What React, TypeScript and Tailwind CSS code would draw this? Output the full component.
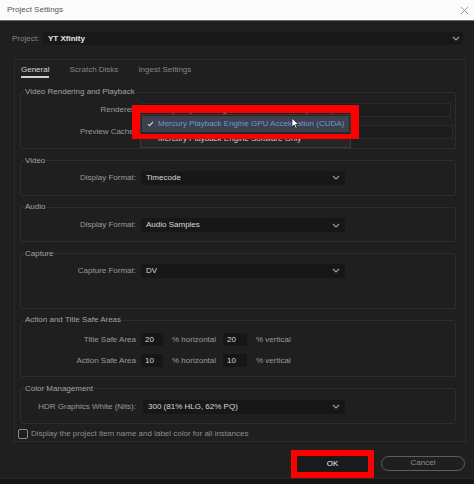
const Chevron = ({ color = "#9a9a9a" }: { color?: string }) => (
  <svg viewBox="0 0 8 5" className="h-[5px] w-[8px]" fill="none" stroke={color} strokeWidth="1.2">
    <path d="M1 1l3 3 3-3" />
  </svg>
);

function Select({ value, className = "w-[204px]" }: { value: string; className?: string }) {
  return (
    <div className={`flex h-[14px] items-center justify-between bg-[#171717] pl-[5px] pr-[5px] text-[#d8d8d8] ${className}`}>
      <span className="truncate">{value}</span>
      <Chevron />
    </div>
  );
}

// selects behind the open menu look dimmed in the shot
function DimSelect({ value, className = "" }: { value: string; className?: string }) {
  return (
    <div className={`flex h-[14px] flex-1 items-center border border-[#2a2a2a] bg-[#1d1d1d] pl-[5px] text-[#8a8a8a] ${className}`}>
      <span className="truncate">{value}</span>
    </div>
  );
}

function Input({ value, className = "w-[22px]" }: { value: string; className?: string }) {
  return (
    <div className={`flex h-[13px] items-center bg-[#161616] pl-[4px] text-[#d8d8d8] ${className}`}>{value}</div>
  );
}

function Row({ label, children, className = "" }: { label: string; children: React.ReactNode; className?: string }) {
  return (
    <div className={`flex items-center ${className}`}>
      <span className="w-[115px] shrink-0 text-right">{label}</span>
      <div className="ml-[5px] flex flex-1 items-center">{children}</div>
    </div>
  );
}

function Group({ title, className = "", children }: { title: string; className?: string; children: React.ReactNode }) {
  return (
    <fieldset className={`rounded-[2px] border border-[#2d2d2d] ${className}`}>
      <legend className="ml-[3px] px-[1px] leading-[10px] text-[#a3a3a3]">{title}</legend>
      {children}
    </fieldset>
  );
}

export default function App() {
  return (
    <div className="relative flex h-[484px] w-[474px] flex-col overflow-hidden bg-[#1f1f1f] font-['Liberation_Sans',Arial,sans-serif] text-[8px] leading-[10px] text-[#9a9a9a]">
      {/* title bar */}
      <div className="flex h-[21px] shrink-0 items-center justify-between border-b border-[#6a6a6a] bg-[#fbfbfb] pl-[7px] pr-[5px]">
        <span className="text-[#555]">Project Settings</span>
        <svg viewBox="0 0 10 10" className="h-[9px] w-[9px]" stroke="#8c8c8c" strokeWidth="1">
          <path d="M1 1l8 8M9 1l-8 8" />
        </svg>
      </div>

      {/* project */}
      <div className="mt-[11px] flex h-[13px] items-center pl-[12px] pr-[11px]">
        <span className="w-[31px] shrink-0 text-[#858585]">Project:</span>
        <div className="flex h-full flex-1 items-center justify-between bg-[#181818] pl-[5px] pr-[3px]">
          <span className="font-bold text-[#e4e4e4]">YT Xfinity</span>
          <Chevron />
        </div>
      </div>

      {/* panel */}
      <div className="ml-[14px] mr-[8px] mt-[14px] border border-[#2b2b2b]">
        <div className="flex h-[20px] gap-[20px] pl-[6px] pt-[5px]">
          <span className="h-[13px] border-b-[2px] border-[#cfcfcf] text-[#d6d6d6]">General</span>
          <span className="text-[#868686]">Scratch Disks</span>
          <span className="text-[#868686]">Ingest Settings</span>
        </div>

        <div className="flex flex-col gap-[6.5px] pl-[5px] pr-[9px] pt-[7px]">
          <Group title="Video Rendering and Playback" className="pb-[9px]">
            <Row label="Renderer:" className="mt-[6px] pr-[4px]">
              <DimSelect value="Mercury Playback Engine GPU Acceleration (CUDA)" className="h-[13px]" />
            </Row>
            <Row label="Preview Cache:" className="mt-[8px] pr-[2px]">
              <DimSelect value="No" />
            </Row>
          </Group>

          <Group title="Video" className="pb-[10px]">
            <Row label="Display Format:" className="mt-[5px]">
              <Select value="Timecode" />
            </Row>
          </Group>

          <Group title="Audio" className="pb-[9px]">
            <Row label="Display Format:" className="mt-[6px]">
              <Select value="Audio Samples" />
            </Row>
          </Group>

          <Group title="Capture" className="pb-[30px]">
            <Row label="Capture Format:" className="mt-[5px]">
              <Select value="DV" />
            </Row>
          </Group>

          <Group title="Action and Title Safe Areas" className="pb-[9px]">
            <Row label="Title Safe Area" className="mt-[8px]">
              <Input value="20" />
              <span className="ml-[9px] w-[51px]">% horizontal</span>
              <Input value="20" className="w-[24px]" />
              <span className="ml-[9px]">% vertical</span>
            </Row>
            <Row label="Action Safe Area" className="mt-[8px]">
              <Input value="10" />
              <span className="ml-[9px] w-[51px]">% horizontal</span>
              <Input value="10" className="w-[24px]" />
              <span className="ml-[9px]">% vertical</span>
            </Row>
          </Group>

          <Group title="Color Management" className="pb-[9px]">
            <Row label="HDR Graphics White (Nits):" className="mt-[6px]">
              <Select value="300 (81% HLG, 62% PQ)" className="ml-[2px] w-[202px]" />
            </Row>
          </Group>
        </div>

        <div className="mb-[2px] ml-[3px] mt-[5px] flex items-center gap-[3px]">
          <span className="h-[10px] w-[10px] rounded-[2px] border border-[#8a8a8a]" />
          <span className="text-[#8e8e8e]">Display the project item name and label color for all instances</span>
        </div>
      </div>

      {/* buttons */}
      <div className="mr-[9px] mt-[14px] flex justify-end gap-[13px]">
        <div className="flex h-[16px] w-[71px] items-center justify-center bg-[#1a1a1a] text-[#f0f0f0] outline outline-[6px] outline-[#ff0000]">
          OK
        </div>
        <div className="flex h-[15px] w-[84px] items-center justify-center rounded-full border border-[#5e5e5e] text-[#8e8e8e]">
          Cancel
        </div>
      </div>
      <div className="mt-auto h-[6px] border-t border-[#2a2a2a] bg-[#151515]" />

      {/* open renderer menu */}
      <div className="absolute left-[140px] top-[114px] w-[211px] border border-[#3a3a3a] bg-[#262626] p-[1px]">
        <div className="flex h-[16px] items-center gap-[4px] bg-[#3c414d] pl-[5px] text-[#6f97d2]">
          <svg viewBox="0 0 8 7" className="h-[6px] w-[7px]" fill="none" stroke="#d6d6d6" strokeWidth="1.2">
            <path d="M1 3.5l2 2 4-4.5" />
          </svg>
          Mercury Playback Engine GPU Acceleration (CUDA)
        </div>
        <div className="flex h-[14px] items-center pl-[16px] text-[#cfcfcf]">Mercury Playback Engine Software Only</div>
      </div>

      {/* annotation box */}
      <div className="absolute left-[132px] top-[105px] h-[34px] w-[227px] border-x-[8px] border-b-[5px] border-t-[8px] border-[#ff0000]" />

      {/* cursor */}
      <svg viewBox="0 0 10 14" className="absolute left-[291px] top-[117px] h-[13px] w-[9px]">
        <path d="M1 1v10l2.5-2.3 1.8 4 1.6-.7-1.8-3.9H8.5Z" fill="#fff" stroke="#111" strokeWidth="0.8" />
      </svg>
    </div>
  );
}
